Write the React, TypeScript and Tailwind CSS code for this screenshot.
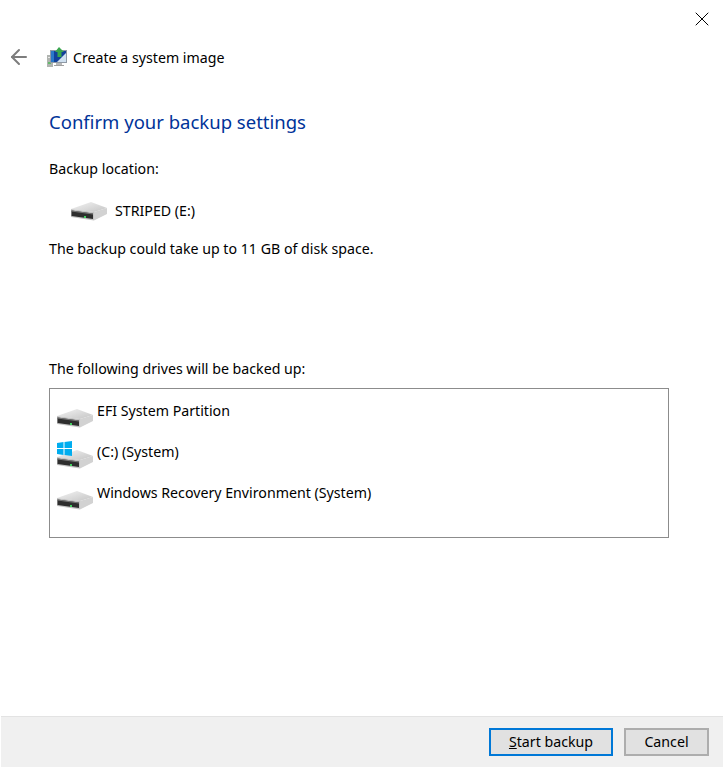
import { ArrowLeft, X } from "lucide-react";

const font = { fontFamily: '"Noto Sans", sans-serif' };

const DriveIcon = ({ className, id }: { className?: string; id: string }) => (
  <svg viewBox="0 0 36 19" className={className}>
    <defs>
      <linearGradient id={id} x1="0" y1="0" x2="1" y2="1">
        <stop offset="0" stopColor="#f4f4f4" />
        <stop offset="1" stopColor="#c4c4c4" />
      </linearGradient>
    </defs>
    {/* top */}
    <path d="M0 7 L20 0 L36 6 L23 10 Z" fill={`url(#${id})`} />
    {/* right side */}
    <path d="M23 10 L36 6 L36 12 L23 18.5 Z" fill="#d2d2d2" />
    {/* front */}
    <path d="M0 7 L23 10 L23 18.5 L0 15 Z" fill="#c4c4c4" />
    <path d="M0.5 8.5 L22 11.5 L22 17 L0.5 14 Z" fill="#2e2e2e" />
    <path d="M0.5 8.5 L22 11.5 L22 12.5 L0.5 9.5 Z" fill="#777777" />
    <rect x="13" y="14" width="2" height="2" fill="#42d060" />
  </svg>
);

const WindowsFlag = () => (
  <svg viewBox="0 0 15 15" className="absolute left-0 -top-[9px] h-[15px] w-[15px]">
    <path d="M0 2 L6.5 1 L6.5 7 L0 7 Z M7.5 1 L15 0 L15 7 L7.5 7 Z M0 8 L6.5 8 L6.5 14 L0 13 Z M7.5 8 L15 8 L15 15 L7.5 14 Z" fill="#00adef" />
  </svg>
);

const SystemImageIcon = () => (
  <svg viewBox="0 0 20 20" className="h-5 w-5">
    <rect x="0" y="8" width="6" height="12" fill="#b0b4b0" />
    <rect x="1" y="10" width="3" height="1" fill="#e8e8e8" />
    <rect x="1" y="15" width="3" height="2" fill="#62b86a" />
    <rect x="3" y="3" width="17" height="13" fill="#8f99a5" />
    <rect x="4" y="4" width="15" height="11" fill="#12409a" />
    <path d="M10 15 L19 6 L19 15 Z" fill="#cfe0f0" />
    <rect x="4" y="4" width="3" height="11" fill="#2a78c8" />
    <rect x="9" y="16" width="6" height="2" fill="#b8b8b8" />
    <rect x="7" y="18" width="10" height="1" fill="#a0a0a0" />
    <path d="M12 0 L17 5 L14.5 5 L14.5 10 L10.5 10 L10.5 5 L8 5 Z" fill="#3aa64e" />
  </svg>
);

const drives = [
  { name: "EFI System Partition", system: false },
  { name: "(C:) (System)", system: true },
  { name: "Windows Recovery Environment (System)", system: false },
];

export default function App() {
  return (
    <div className="flex h-[768px] w-[724px] flex-col bg-white text-[14.2px] leading-5 text-black" style={font}>
      <div className="flex h-[38px] justify-end">
        <button type="button" className="flex w-[44px] items-center justify-center text-black">
          <X size={24} strokeWidth={1} />
        </button>
      </div>
      <div className="flex h-[38px] items-center">
        <ArrowLeft size={24} strokeWidth={2} className="ml-[7px] text-[#7d7d7d]" />
        <div className="ml-[16px]">
          <SystemImageIcon />
        </div>
        <span className="ml-[6px] pt-px">Create a system image</span>
      </div>
      <div className="flex flex-1 flex-col px-[49px]">
        <h1 className="mt-[32px] text-[18.5px] leading-7 text-[#003399]">Confirm your backup settings</h1>
        <p className="mt-[23px]">Backup location:</p>
        <div className="mt-[22px] ml-[22px] flex items-center gap-[8px]">
          <DriveIcon id="drive-target" className="h-[19px] w-[36px]" />
          <span>STRIPED (E:)</span>
        </div>
        <p className="mt-[18px]">The backup could take up to 11 GB of disk space.</p>
        <p className="mt-[100px]">The following drives will be backed up:</p>
        <div className="mt-[9px] flex h-[150px] w-[620px] flex-col gap-[21px] border border-[#8c8c8c] pt-[12px] pl-[7px]">
          {drives.map((d, i) => (
            <div key={d.name} className="flex h-5 gap-[4px]">
              <div className="relative mt-[8px] h-[19px] w-[36px]">
                {d.system && <WindowsFlag />}
                <DriveIcon id={`drive-${i}`} className="h-[19px] w-[36px]" />
              </div>
              <span>{d.name}</span>
            </div>
          ))}
        </div>
      </div>
      <div className="mx-px mb-px flex h-[51px] items-center justify-end gap-[11px] border-t border-[#e3e3e3] bg-[#f0f0f0] pr-[14px]">
        <button type="button" className="h-[28px] w-[124px] border-2 border-[#0078d7] bg-[#e1e1e1]">
          <span className="underline">S</span>tart backup
        </button>
        <button type="button" className="h-[28px] w-[85px] border-2 border-[#adadad] bg-[#e1e1e1]">
          Cancel
        </button>
      </div>
    </div>
  );
}
